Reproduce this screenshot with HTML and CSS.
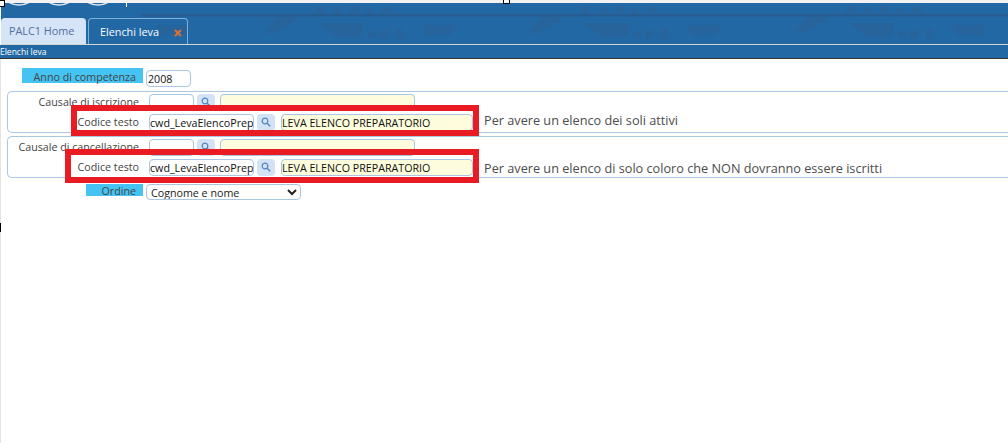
FILE: index.html
```html
<!DOCTYPE html>
<html lang="en">
<head>
    <meta charset="UTF-8">
    <meta name="viewport" content="width=device-width, initial-scale=1.0">
    <title>Elenchi leva</title>
    <link rel="stylesheet" href="styles.css">
</head>
<body>
    <div class="top-strip"></div>
    <div class="header">
        <svg class="header-art" width="1008" height="41" viewBox="0 0 1008 41">
            <defs>
                <pattern id="skyline" patternUnits="userSpaceOnUse" width="265" height="41">
                    <g fill="#27649b">
                        <path d="M12 12h23l-10 9-20 10-8 0z"/>
                        <path d="M53 20h44v14h-27z"/>
                        <path d="M102 28h8v7h-8zM114 27h8v8h-8zM130 26h7v10h-7z"/>
                        <path d="M155 22h35l-5 10h-24z"/>
                        <path d="M50 3h9v7h-9zM68 4h8v6h-8zM84 3h9v7h-9zM100 5h7v5h-7zM116 4h10v6h-10z"/>
                    </g>
                    <path d="M0 11h265v2.500H0z" fill="#285c8e"/>
                </pattern>
            </defs>
            <rect x="140" width="868" height="41" fill="url(#skyline)"/>
            <g fill="none" stroke="#dfe6ee" stroke-width="1.500">
                <circle cx="18" cy="-18" r="20"/>
                <circle cx="58" cy="-18" r="20"/>
                <circle cx="97" cy="-18" r="20"/>
            </g>
            <path d="M125.500 0v4" stroke="#fff" stroke-width="1"/>
        </svg>
        <div class="tabs">
            <div class="tab tab-home">PALC1 Home</div>
            <div class="tab tab-active">Elenchi leva<svg class="tab-close" width="8" height="8" viewBox="0 0 8 8"><path d="M1 1l6 6M7 1l-6 6" stroke="#e0702f" stroke-width="2"/></svg></div>
        </div>
    </div>
    <div class="subbar">Elenchi leva</div>

    <div class="content">
        <div class="row row-anno">
            <div class="label label-cyan">Anno di competenza</div>
            <input class="input input-anno" type="text" value="2008">
        </div>

        <div class="box">
            <div class="row">
                <div class="label">Causale di iscrizione</div>
                <input class="input input-code" type="text">
                <button class="search-btn"><svg width="10" height="10" viewBox="0 0 10 10"><circle cx="4" cy="4" r="2.800" fill="none" stroke="#4f86bf" stroke-width="1.200"/><path d="M6.200 6.200l3 3" stroke="#4f86bf" stroke-width="1.400"/></svg></button>
                <input class="input input-desc" type="text">
            </div>
            <div class="row">
                <div class="label">Codice testo</div>
                <input class="input input-long" type="text" value="cwd_LevaElencoPreparatorio">
                <button class="search-btn"><svg width="10" height="10" viewBox="0 0 10 10"><circle cx="4" cy="4" r="2.800" fill="none" stroke="#4f86bf" stroke-width="1.200"/><path d="M6.200 6.200l3 3" stroke="#4f86bf" stroke-width="1.400"/></svg></button>
                <input class="input input-title" type="text" value="LEVA ELENCO PREPARATORIO">
                <div class="note note-short">Per avere un elenco dei soli attivi</div>
            </div>
        </div>

        <div class="box">
            <div class="row">
                <div class="label">Causale di cancellazione</div>
                <input class="input input-code" type="text">
                <button class="search-btn"><svg width="10" height="10" viewBox="0 0 10 10"><circle cx="4" cy="4" r="2.800" fill="none" stroke="#4f86bf" stroke-width="1.200"/><path d="M6.200 6.200l3 3" stroke="#4f86bf" stroke-width="1.400"/></svg></button>
                <input class="input input-desc" type="text">
            </div>
            <div class="row">
                <div class="label">Codice testo</div>
                <input class="input input-long" type="text" value="cwd_LevaElencoPreparatorio">
                <button class="search-btn"><svg width="10" height="10" viewBox="0 0 10 10"><circle cx="4" cy="4" r="2.800" fill="none" stroke="#4f86bf" stroke-width="1.200"/><path d="M6.200 6.200l3 3" stroke="#4f86bf" stroke-width="1.400"/></svg></button>
                <input class="input input-title" type="text" value="LEVA ELENCO PREPARATORIO">
                <div class="note note-long">Per avere un elenco di solo coloro che NON dovranno essere iscritti</div>
            </div>
        </div>

        <div class="row row-ordine">
            <div class="label label-cyan label-ordine">Ordine</div>
            <select class="select">
                <option>Cognome e nome</option>
            </select>
        </div>

        <div class="mark mark-one"></div>
        <div class="mark mark-two"></div>
    </div>

    <div class="handle handle-a"></div>
    <div class="handle handle-b"></div>
    <div class="handle handle-c"></div>
</body>
</html>
```

FILE: styles.css
```css
html, body {
    margin: 0;
    height: 100%;
    overflow: hidden;
}
body {
    display: flex;
    flex-direction: column;
    font-family: "Open Sans", "Noto Sans", sans-serif;
    font-size: 10.7px;
    color: #444;
    background: #fff;
}
.top-strip {
    height: 3px;
    background: #f2f2f2;
}
.header {
    position: relative;
    height: 41px;
    margin-left: 1px;
    background: #2168a5;
    border-bottom: 1px solid #d5d5d5;
    display: flex;
    align-items: flex-end;
}
.header-art {
    position: absolute;
    left: 0;
    top: 0;
}
.tabs {
    position: relative;
    display: flex;
    gap: 2px;
}
.tab {
    height: 26px;
    line-height: 25px;
    font-size: 10.8px;
    box-sizing: border-box;
    border-radius: 4px 4px 0 0;
    white-space: nowrap;
}
.tab-home {
    width: 85px;
    padding-left: 8px;
    color: #4f6f9c;
    background: #d6e4f8;
}
.tab-active {
    width: 100px;
    padding-left: 11px;
    color: #fff;
    border: 1px solid #7fb0d8;
    border-bottom: 0;
}
.tab-close {
    margin-left: 15px;
    vertical-align: -1px;
}
.subbar {
    height: 13px;
    line-height: 13px;
    background: #2168a5;
    border-bottom: 1px solid #333;
    color: #fff;
    font-size: 8.500px;
}
.content {
    position: relative;
    flex: 1;
    padding: 9px 0 0 6px;
    border-left: 1px solid #e4e4e4;
}
.row {
    display: flex;
    align-items: flex-start;
    height: 17px;
}
.label {
    width: 132px;
    flex: none;
    box-sizing: border-box;
    padding-right: 1px;
    text-align: right;
    line-height: 16px;
    color: #444;
}
.row-anno {
    height: 19px;
    margin-bottom: 4px;
}
.label-cyan {
    margin-left: 15px;
    width: 121px;
    height: 15px;
    line-height: 18px;
    padding-right: 7px;
    background: #45c3f2;
}
.label-ordine {
    margin-left: 79px;
    width: 57px;
    height: 12px;
    line-height: 14px;
}
.input {
    box-sizing: border-box;
    height: 17px;
    margin: 0;
    padding: 0;
    font-family: inherit;
    font-size: 10.7px;
    color: #111;
    background: #fff;
    border: 1px solid #a9c6e2;
    border-radius: 4px;
    outline: none;
}
.input-anno {
    width: 45px;
    margin: 2px 0 0 3px;
    padding-left: 1px;
}
.input-code {
    width: 45px;
    margin-left: 9px;
}
.input-long {
    width: 105px;
    margin-left: 9px;
}
.input-desc {
    width: 195px;
    margin-left: 5px;
    background: #fdfcdc;
}
.input-title {
    width: 192px;
    margin-left: 6px;
    background: #fdfcdc;
}
.search-btn {
    flex: none;
    width: 18px;
    height: 17px;
    margin: 0 0 0 3px;
    padding: 0;
    border: 0;
    border-radius: 4px;
    background: #d3e2f5;
}
.note {
    margin-left: 11px;
    font-size: 12.700px;
    line-height: 15px;
    color: #4c4c4c;
    white-space: nowrap;
}
.note-short {
    margin-top: -1px;
}
.note-long {
    margin-top: 2px;
}
.box {
    height: 42px;
    box-sizing: border-box;
    padding-top: 2px;
    margin-bottom: 3px;
    border: 1px solid #a9c6e2;
    border-right: 0;
    border-radius: 5px 0 0 5px;
    display: flex;
    flex-direction: column;
    gap: 3px;
}
.row-ordine {
    margin-top: 6px;
}
.select {
    box-sizing: border-box;
    width: 155px;
    height: 16px;
    margin: 0 0 0 3px;
    padding: 0;
    font-family: inherit;
    font-size: 10.7px;
    color: #222;
    background: #fff;
    border: 1px solid #a9c6e2;
    border-radius: 4px;
    outline: none;
}
.mark {
    position: absolute;
    box-sizing: border-box;
    border: 6px solid #e81c22;
    pointer-events: none;
}
.mark-one {
    left: 70px;
    top: 46px;
    width: 408px;
    height: 31px;
}
.mark-two {
    left: 64px;
    top: 90px;
    width: 414px;
    height: 34px;
}
.handle {
    position: absolute;
    width: 5px;
    height: 5px;
    background: #fff;
    border: 1px solid #000;
}
.handle-a {
    left: -2px;
    top: 0;
}
.handle-b {
    left: 503px;
    top: -3px;
}
.handle-c {
    left: -6px;
    top: 223px;
    height: 7px;
}
```
